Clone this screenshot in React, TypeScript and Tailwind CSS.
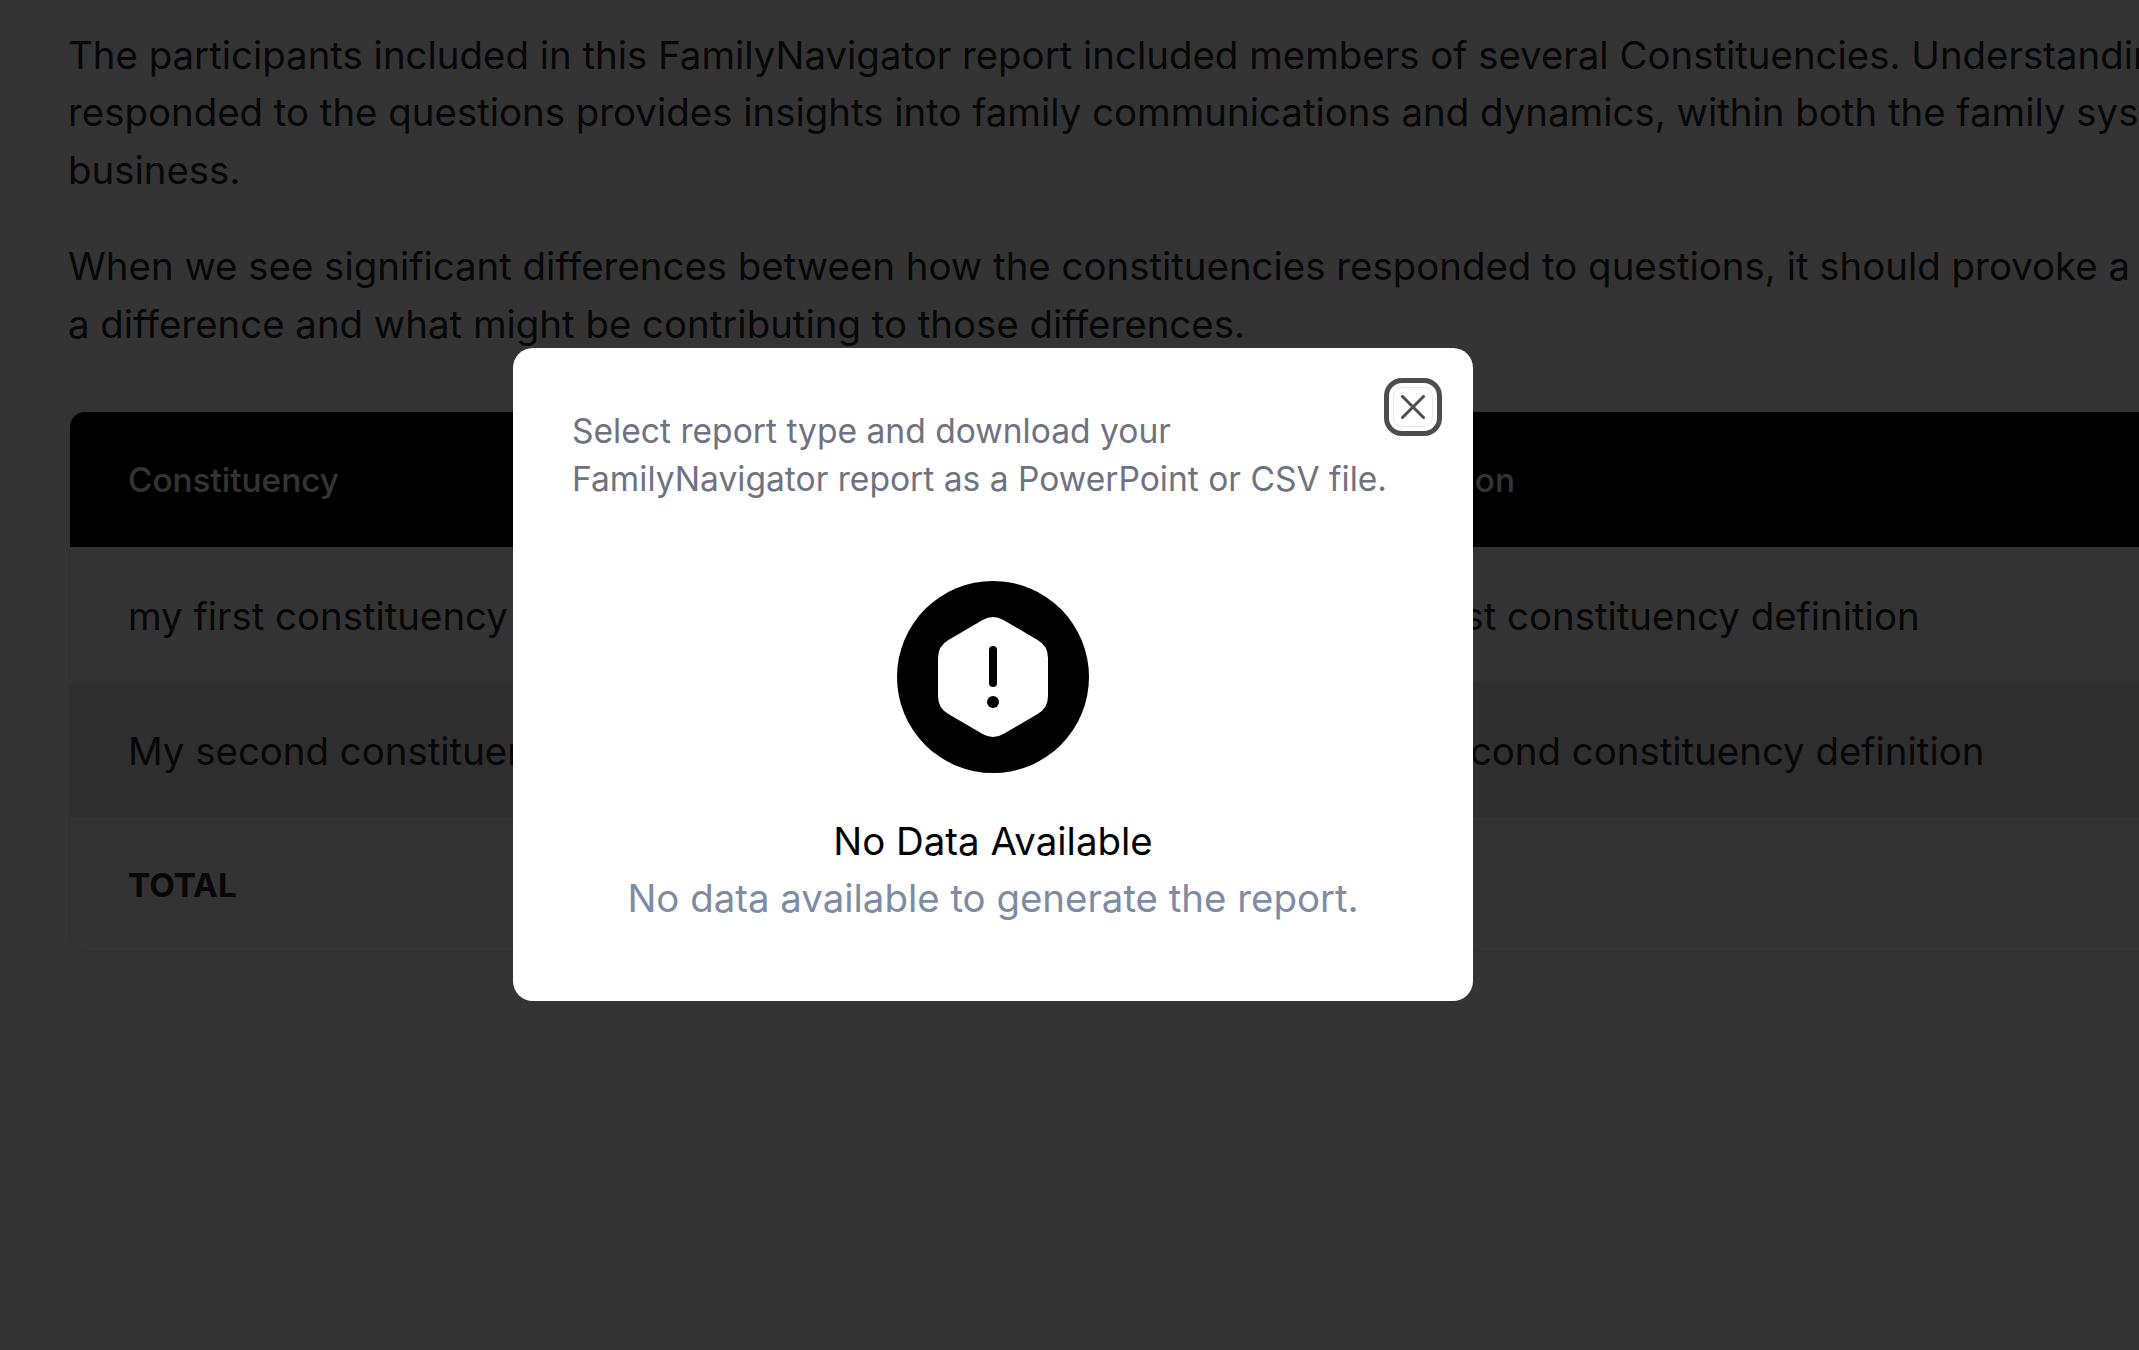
const rows = [
  { name: "my first constituency", definition: "my first constituency definition", striped: false },
  { name: "My second constituency", definition: "My second constituency definition", striped: true },
];

function WarningIcon() {
  return (
    <svg viewBox="0 0 192 192" className="h-[192px] w-[192px]">
      <circle cx="96" cy="96" r="96" fill="#000" />
      <path
        d="M85.6 39 Q96 33 106.4 39 L140.6 59 Q151 65 151 77 L151 115 Q151 127 140.6 133 L106.4 153 Q96 159 85.6 153 L51.4 133 Q41 127 41 115 L41 77 Q41 65 51.4 59 Z"
        fill="#fff"
      />
      <rect x="92" y="65" width="8" height="41" rx="4" fill="#000" />
      <circle cx="96" cy="121" r="6" fill="#000" />
    </svg>
  );
}

function CloseButton() {
  return (
    <button className="absolute left-[871px] top-[30px] flex h-[58px] w-[58px] items-center justify-center rounded-[18px] border-[5px] border-[#4d4d4f] bg-white">
      <span className="flex h-[40px] w-[40px] items-center justify-center rounded-[10px] border border-[#e5e7eb]">
        <svg viewBox="0 0 24 24" className="h-[24px] w-[24px]" fill="none" stroke="#4d4d4f" strokeWidth="3" strokeLinecap="round">
          <path d="M1.5 1.5 22.5 22.5M22.5 1.5 1.5 22.5" />
        </svg>
      </span>
    </button>
  );
}

export default function App() {
  return (
    <div className="relative h-screen w-full overflow-hidden bg-white font-['Inter',sans-serif] text-[#222]">
      <div className="w-[3200px] pl-[68px] pt-[27px] text-[38.4px] leading-[57.4px]">
        <p>
          The participants included in this FamilyNavigator report included members of several Constituencies. Understanding how each group
          <br />
          responded to the questions provides insights into family communications and dynamics, within both the family system and the
          <br />
          business.
        </p>
        <p className="mt-[39px]">
          When we see significant differences between how the constituencies responded to questions, it should provoke a discussion about why there is
          <br />
          a difference and what might be contributing to those differences.
        </p>
      </div>

      <div className="ml-[69px] mt-[58px] w-[2500px] overflow-hidden rounded-2xl border border-[#e8e8e8]">
        <div className="grid h-[135px] grid-cols-[1232px_1fr] items-center bg-black px-[58px] pt-[2px] text-[33.3px] font-medium text-white">
          <span>Constituency</span>
          <span className="pl-[2px]">Definition</span>
        </div>
        {rows.map((row) => (
          <div
            key={row.name}
            className={`grid h-[135px] grid-cols-[1232px_1fr] items-center px-[58px] pt-[4px] text-[38.4px] ${row.striped ? "bg-[#e6e6e6]" : "bg-white"}`}
          >
            <span>{row.name}</span>
            <span>{row.definition}</span>
          </div>
        ))}
        <div className="flex h-[134px] items-center bg-[#f8f8f8] px-[58px] pt-[4px] text-[33.3px] font-bold">TOTAL</div>
      </div>

      <div className="absolute inset-0 bg-black/[.795]" />

      <div className="absolute left-[513px] top-[348px] flex h-[653px] w-[960px] flex-col items-center rounded-[20px] bg-white px-[58px] pt-[59px]">
        <CloseButton />
        <p className="w-full pl-px text-[33.6px] leading-[48px] text-[#6f7280]">
          Select report type and download your
          <br />
          FamilyNavigator report as a PowerPoint or CSV file.
        </p>
        <div className="mt-[78px]">
          <WarningIcon />
        </div>
        <h2 className="mt-[40px] text-[38.4px] leading-[57.4px] text-black">No Data Available</h2>
        <p className="text-[38.4px] leading-[57.4px] text-[#7d8ba3]">No data available to generate the report.</p>
      </div>
    </div>
  );
}
